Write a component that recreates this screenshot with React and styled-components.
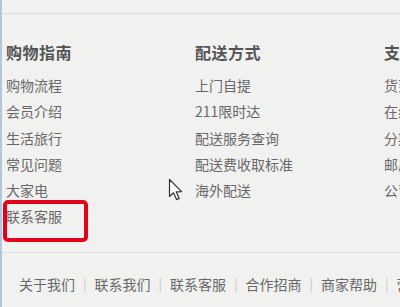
import React from 'react';
import styled, { createGlobalStyle } from 'styled-components';

const GlobalStyle = createGlobalStyle`
  html, body {
    margin: 0;
    padding: 0;
    background: #f1f2f0;
    font-family: "Noto Sans CJK SC", "Liberation Sans", sans-serif;
  }
`;

const columns = [
	{ title: '购物指南', links: ['购物流程', '会员介绍', '生活旅行', '常见问题', '大家电', '联系客服'] },
	{ title: '配送方式', links: ['上门自提', '211限时达', '配送服务查询', '配送费收取标准', '海外配送'] },
	{ title: '支付方式', links: ['货到付款', '在线支付', '分期付款', '邮局汇款', '公司转账'] },
];

const footerLinks = ['关于我们', '联系我们', '联系客服', '合作招商', '商家帮助', '营销中心'];

function App() {
	return (
		<Page>
			<GlobalStyle />
			<TopRule />
			<Columns>
				{columns.map((col, i) => (
					<Column key={col.title}>
						<Heading>{col.title}</Heading>
						<LinkList>
							{col.links.map((l) => (
								<LinkItem key={l}>{l}</LinkItem>
							))}
						</LinkList>
						{i === 0 && <Highlight />}
					</Column>
				))}
				<Cursor viewBox="0 0 16 24">
					<path
						d="M1.5 1.5 L1.5 18.5 L5.5 14.8 L8.6 21.6 L11.2 20.4 L8.2 13.8 L13.6 13.6 Z"
						fill="#fff"
						stroke="#333"
						strokeWidth="1.2"
						strokeLinejoin="round"
					/>
				</Cursor>
			</Columns>
			<Footer>
				{footerLinks.map((l, i) => (
					<React.Fragment key={l}>
						{i > 0 && <Sep>|</Sep>}
						<FooterLink>{l}</FooterLink>
					</React.Fragment>
				))}
			</Footer>
		</Page>
	);
}

const Page = styled.div`
	position: relative;
	width: 400px;
	height: 307px;
	overflow: hidden;
	border-left: 2px solid #b3c7dc;
	box-sizing: border-box;
`;

const TopRule = styled.div`
	height: 13px;
	border-bottom: 1px solid #dcdddb;
`;

const Columns = styled.div`
	position: relative;
	display: flex;
	padding: 28px 0 0 4px;
	height: 239px;
	box-sizing: border-box;
	border-bottom: 1px solid #e0e1df;
`;

const Column = styled.div`
	position: relative;
	flex: 0 0 189px;
	white-space: nowrap;
`;

const Heading = styled.div`
	font-size: 16px;
	line-height: 20px;
	font-weight: bold;
	color: #555;
	letter-spacing: 0.5px;
`;

const LinkList = styled.div`
	margin-top: 10px;
	display: flex;
	flex-direction: column;
`;

const LinkItem = styled.div`
	font-size: 14px;
	line-height: 26.3px;
	color: #686868;
`;

const Highlight = styled.div`
	position: absolute;
	left: -3px;
	top: 158px;
	width: 85px;
	height: 42px;
	box-sizing: border-box;
	border: 4px solid #e2001b;
	border-radius: 5px;
`;

const Cursor = styled.svg`
	position: absolute;
	left: 166px;
	top: 164px;
	width: 16px;
	height: 24px;
`;

const Footer = styled.div`
	display: flex;
	align-items: center;
	padding: 21px 0 0 17px;
	white-space: nowrap;
	font-size: 14px;
	line-height: 20px;
	color: #686868;
`;

const FooterLink = styled.span``;

const Sep = styled.span`
	color: #c8c8c8;
	margin: 0 8px;
	font-size: 13px;
`;

export default App;
